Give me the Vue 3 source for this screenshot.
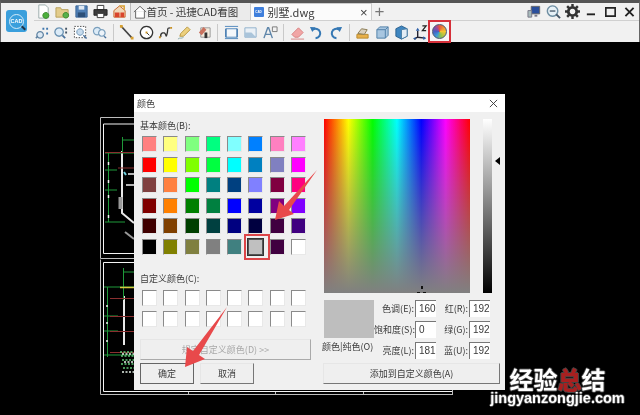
<script setup>
const topIcons = [
  [{ d: 'M3 1h7l3 3v11H3z', f: '#fff', s: '#9aa' }, { d: 'M10.500 9a3.200 3.200 0 1 0 .01 0z', f: '#4caf3c', s: '#3a8a2c' }],
  [{ d: 'M1 4h5l1 2h7v8H1z', f: '#e3cc8c', s: '#b8a05a' }, { d: 'M11.500 9a3 3 0 1 0 .01 0z', f: '#58b04a', s: '#3a8a2c' }],
  [{ d: 'M2 2h12v12H2z', f: '#4f7fb5', s: '#3a6595' }, { d: 'M5 2h6v4H5z', f: '#dfe8f2', s: 'none' }, { d: 'M4 9h8v5H4z', f: '#2c4f78', s: 'none' }],
  [{ d: 'M4.500 1.500h7V6h-7z', f: '#fff', s: '#333' }, { d: 'M1 6h14v6H1z', f: '#3c3c3c', s: '#222' }, { d: 'M4.500 10h7v4.500h-7z', f: '#fff', s: '#333' }],
  [{ d: 'M2 7l6-5 6 5v7H2z', f: '#f0d8b8', s: '#c8672b' }, { d: 'M3 9h5v5H3zM9 9h4v5H9z', f: '#d9442c', s: 'none' }, { d: 'M8 2l5 0 0 4', f: 'none', s: '#d9a030', w: 1.6 }]
]
const g1 = [
  [{ d: 'M6.500 7a3.500 3.500 0 1 0 .01 0z', f: '#dce8f3', s: '#5a7f9f', w: 1.3 }, { d: 'M4 12l-2 2', f: 'none', s: '#5a7f9f', w: 1.6 }, { d: 'M9 3h2v2H9zM13 3h2v2h-2zM13 8h2v2h-2z', f: '#3f76ac', s: 'none' }],
  [{ d: 'M6.500 3a4.500 4.500 0 1 0 .01 0z', f: '#dcebf7', s: '#6c93b3', w: 1.4 }, { d: 'M10 11l3 3', f: 'none', s: '#47709c', w: 1.8 }, { d: 'M13 3h2v2h-2zM13 7h2v2h-2z', f: '#456', s: 'none' }],
  [{ d: 'M1.500 1.500h12v12h-12z', f: '#fff', s: '#444', da: '1.500 1.500' }, { d: 'M7.500 4a3.500 3.500 0 1 0 .01 0z', f: '#c7dbed', s: '#6c93b3' }, { d: 'M11 11l3.500 3.500', f: 'none', s: '#47709c', w: 1.6 }],
  [{ d: 'M5.500 2.500a4 4 0 1 0 .01 0z', f: '#dcebf7', s: '#7a9fbd', w: 1.3 }, { d: 'M10.500 5a3.500 3.500 0 1 0 .01 0z', f: '#eef4fa', s: '#7a9fbd', w: 1.3 }, { d: 'M13 12l2 2', f: 'none', s: '#47709c', w: 1.5 }]
]
const g2 = [
  [{ d: 'M3 2L14 14', f: 'none', s: '#444', w: 1.6 }, { d: 'M1 0h3v3H1zM12.500 12.500h3v3h-3z', f: '#d7a030', s: 'none' }],
  [{ d: 'M8 1.500a6.500 6.500 0 1 0 .01 0z', f: '#fff', s: '#333', w: 1.4 }, { d: 'M8 8l3 3', f: 'none', s: '#333' }, { d: 'M7 7h2v2H7z', f: '#c89020', s: 'none' }],
  [{ d: 'M3 13c-1-5 4-6 5-3s1 2 2-2-1-5 3-5', f: 'none', s: '#333', w: 1.4 }, { d: 'M1 12h2v2H1zM13 2h2v2h-2z', f: '#c89020', s: 'none' }],
  [{ d: 'M3 12l1-3 7-7 3 3-7 7z', f: '#ecd07e', s: '#b8963f' }, { d: 'M1 15c2-2 4 0 6-2', f: 'none', s: '#8aa', w: 1 }],
  [{ d: 'M4 3h10v10H4z', f: '#f2eadc', s: '#999' }, { d: 'M2 8l5-6 3 3-5 6z', f: '#c9725f', s: 'none' }, { d: 'M8 8h3v6H8z', f: '#333', s: 'none' }]
]
const g3 = [
  [{ d: 'M2 4h12v9H2z', f: '#f4f7fa', s: '#4f86bc' }, { d: 'M1 1.500h14M1 14.500h14', f: 'none', s: '#4f86bc' }, { d: 'M2 4v9M14 4v9', f: 'none', s: '#3f76ac', w: 1.4 }],
  [{ d: 'M2 3h12v10H2z', f: '#eaf0f6', s: '#8fb0cc' }, { d: 'M2 13V8h7l5 5z', f: '#aac4da', s: 'none' }],
  [{ d: 'M1 14L5 3h1l4 11M3 10h5', f: 'none', s: '#5f86aa', w: 1.5 }, { d: 'M10 2h5v5h-5z', f: '#f2f2f2', s: '#777' }]
]
const g4 = [
  [{ d: 'M2 10l7-7 5 5-5 5H5z', f: '#f1a5a5', s: '#d88080' }, { d: 'M1 15h14', f: 'none', s: '#d88080' }],
  [{ d: 'M4 5a5 5 0 1 1 3 9', f: 'none', s: '#3578b4', w: 2.200 }, { d: 'M1 2l6 .5-3.500 5z', f: '#3578b4', s: 'none' }],
  [{ d: 'M12 5a5 5 0 1 0-3 9', f: 'none', s: '#3578b4', w: 2.200 }, { d: 'M15 2l-6 .5 3.500 5z', f: '#3578b4', s: 'none' }]
]
const g5 = [
  [{ d: 'M2 10h12v4H2z', f: '#e8b04a', s: '#b98a30' }, { d: 'M3 9l4-5 6 1-3 5z', f: '#d9d0c0', s: '#8a7a50' }],
  [{ d: 'M2 5l3-3h9v9l-3 3H2z', f: '#a8c6e0', s: '#4f7fa8' }, { d: 'M2 5h9v9M11 5l3-3', f: 'none', s: '#4f7fa8' }],
  [{ d: 'M8 1l6 3v8l-6 3-6-3V4z', f: '#3f86c0', s: '#2c628f' }, { d: 'M8 5l6-1v8l-6 3z', f: '#e4edf5', s: '#4c7fa5' }],
  [{ d: 'M5 13V6M5 13l8 1M5 13L1 15', f: 'none', s: '#223', w: 1.5 }, { d: 'M3 6l2-3 2 3zM11 12l3 2-3 2zM0 14l3-1v3z', f: '#2c5fa8', s: 'none' }, { d: 'M10 1h4l-4 5h4', f: 'none', s: '#222', w: 1.300 }]
]
const rightIcons = [
  [{ d: 'M4.500 2.500h9v8h-9z', f: '#2a4f9c', s: '#666' }, { d: 'M1 7h4v7H1z', f: '#a8bbbb', s: '#778' }, { d: 'M8 11.500h3v2H8z', f: '#778', s: 'none' }],
  [{ d: 'M7 2a5.500 5.500 0 1 0 .01 0z', f: '#e7f1f7', s: '#6f8fa3', w: 1.5 }, { d: 'M11 11l4 4', f: 'none', s: '#456', w: 2 }, { d: 'M4 7.500h6', f: 'none', s: '#456', w: 1.4 }]
]
const basic = [
  '#ff8080', '#ffff80', '#80ff80', '#00ff80', '#80ffff', '#0080ff', '#ff80c0', '#ff80ff',
  '#ff0000', '#ffff00', '#80ff00', '#00ff40', '#00ffff', '#0080c0', '#8080c0', '#ff00ff',
  '#804040', '#ff8040', '#00ff00', '#008080', '#004080', '#8080ff', '#800040', '#ff0080',
  '#800000', '#ff8000', '#008000', '#008040', '#0000ff', '#0000a0', '#800080', '#8000ff',
  '#400000', '#804000', '#004000', '#004040', '#000080', '#000040', '#400040', '#400080',
  '#000000', '#808000', '#808040', '#808080', '#408080', '#c0c0c0', '#400040', '#ffffff'
]
const fields = [
  { label: '色调(E):', value: '160' },
  { label: '红(R):', value: '192' },
  { label: '饱和度(S):', value: '0' },
  { label: '绿(G):', value: '192' },
  { label: '亮度(L):', value: '181' },
  { label: '蓝(U):', value: '192' }
]
const groups = [g1, g2, g3, g4, g5]
</script>

<template>
  <div class="app">
    <header class="chrome">
      <div class="logo"><span>CAD</span></div>
      <div class="bars">
        <div class="tabrow">
          <div class="quick">
            <svg v-for="(ic, i) in topIcons" :key="i" class="icon" viewBox="0 0 16 16">
              <path v-for="(p, j) in ic" :key="j" :d="p.d" :fill="p.f" :stroke="p.s" :stroke-width="p.w || 1" />
            </svg>
          </div>
          <div class="tab home">
            <svg class="house" viewBox="0 0 16 16"><path d="M1 8l7-6.500 7 6.500M3 7v8h10V7" fill="#fff" stroke="#555" /></svg>
            <span>首页 - 迅捷CAD看图</span>
          </div>
          <div class="tab active">
            <div class="tabicon">CAD</div>
            <span class="tabname">别墅.dwg</span>
            <span class="tabx">×</span>
          </div>
          <span class="plus">+</span>
          <div class="winctl">
            <svg v-for="(ic, i) in rightIcons" :key="i" class="icon" viewBox="0 0 16 16">
              <path v-for="(p, j) in ic" :key="j" :d="p.d" :fill="p.f" :stroke="p.s" :stroke-width="p.w || 1" />
            </svg>
            <svg class="icon" viewBox="0 0 16 16">
              <path d="M8 3.500a4.500 4.500 0 1 0 .01 0z" fill="none" stroke="#333" stroke-width="3" />
              <path d="M8 0v3M8 13v3M0 8h3M13 8h3M2.300 2.300l2 2M11.700 11.700l2 2M2.300 13.700l2-2M11.700 4.300l2-2" stroke="#333" stroke-width="2.600" />
            </svg>
            <svg class="ctl" viewBox="0 0 12 12"><path d="M2 8h7" stroke="#222" stroke-width="1.600" /></svg>
            <svg class="ctl" viewBox="0 0 12 12"><path d="M2 2.500h8v7H2z" fill="none" stroke="#222" stroke-width="1.400" /></svg>
            <svg class="ctl" viewBox="0 0 12 12"><path d="M2.500 2.500l7 7M9.500 2.500l-7 7" stroke="#222" stroke-width="1.600" /></svg>
          </div>
        </div>
        <div class="toolrow">
          <template v-for="(grp, g) in groups" :key="g">
            <i v-if="g" class="sep"></i>
            <div class="group">
              <svg v-for="(ic, i) in grp" :key="i" class="icon" viewBox="0 0 16 16">
                <path v-for="(p, j) in ic" :key="j" :d="p.d" :fill="p.f" :stroke="p.s" :stroke-width="p.w || 1" :stroke-dasharray="p.da" />
              </svg>
            </div>
          </template>
          <div class="colorbtn">
            <div class="wheel"></div>
          </div>
        </div>
      </div>
    </header>

    <main class="canvas">
      <svg class="drawing" viewBox="0 42 640 373">
        <g fill="none" stroke="#bdbdbd">
          <path d="M100.500 117.500H452M100.500 117.500V258.500H460" />
          <path d="M100.500 259.500V394.500H452" />
          <path d="M188.500 391v4M275.500 391v4M363.500 391v4M452.500 390v5" />
        </g>
        <g fill="none" stroke="#f4f4f4">
          <path d="M103.500 124V253.500H134M103.500 124H134" />
          <path d="M103.500 262.500H134M103.500 262.500V391.500H452" />
        </g>
        <g fill="none" stroke="#e8e8e8" stroke-width="2">
          <path d="M122 151V213L134 223" />
          <path d="M125 232L134 239" stroke="#999" />
          <path d="M124 296V345" />
        </g>
        <path d="M120.500 197v12" stroke="#999" stroke-width="4" />
        <g fill="none" stroke="#1f9a3a">
          <path d="M108.500 153V222M105 153h29M122.500 137V153M122 140h12M105 170h12M105 190h12M105 222h20" />
          <path d="M107.500 287V357M104 287h30M123.500 268V300M123 272h11M104 316h14M104 331h14M104 355h30" />
        </g>
        <g fill="none" stroke="#8a2f2f">
          <path d="M105 152.500h29M118 168h16M110 298.500h24M110 316.500h24M110 331.500h24M110 352.500h24" />
        </g>
        <path d="M120 287.500h14" stroke="#d8c840" stroke-width="1.500" />
        <g fill="none" stroke="#f0f0f0" stroke-width="1.500">
          <path d="M108.500 162v3M108.500 180v3M108.500 195v3M108.500 215v3" />
          <path d="M128 174h7M126 185h8" />
          <path d="M107 305v2M107 322v2M107 340v2" />
        </g>
        <path d="M124 172l2 3" stroke="#6fd0e0" stroke-width="2" />
        <g fill="none" stroke-dasharray="2 1.500" stroke-width="1.500">
          <path d="M120 352h14M121 356h13M122 360h12M121 364h13M123 368h11" stroke="#5fc878" />
          <path d="M122 354h12M124 362h10M122 372h12" stroke="#e8f4ea" />
        </g>
      </svg>

      <section class="dialog">
        <div class="title">
          <span>颜色</span>
          <svg class="close" viewBox="0 0 10 10"><path d="M1 1l8 8M9 1l-8 8" stroke="#333" stroke-width="1" /></svg>
        </div>
        <div class="body">
          <div class="left">
            <div class="lbl first">基本颜色(B):</div>
            <div class="swatches">
              <div v-for="(c, i) in basic" :key="i" class="sw" :class="{ picked: i === 45 }" :style="{ background: c }"></div>
            </div>
            <div class="lbl custom">自定义颜色(C):</div>
            <div class="swatches two">
              <div v-for="n in 16" :key="n" class="sw blank"></div>
            </div>
            <button class="btn wide" disabled>规定自定义颜色(D) &gt;&gt;</button>
            <div class="actions">
              <button class="btn ok">确定</button>
              <button class="btn">取消</button>
            </div>
          </div>
          <div class="right">
            <div class="pickers">
              <div class="spectrum"><div class="cross"></div></div>
              <div class="lum"></div>
              <div class="caret"></div>
            </div>
            <div class="mid">
              <div class="previewcol">
                <div class="preview"></div>
                <div class="previewlbl">颜色|纯色(O)</div>
              </div>
              <div class="fields">
                <template v-for="f in fields" :key="f.label">
                  <label>{{ f.label }}</label>
                  <div class="val">{{ f.value }}</div>
                </template>
              </div>
            </div>
            <button class="btn add">添加到自定义颜色(A)</button>
          </div>
        </div>
      </section>

      <div class="pickbox"></div>
      <svg class="arrows" viewBox="0 42 640 373">
        <path d="M275 220L279 201L284 206L317 170L289 210L294 214z" fill="#e8494b" />
        <path d="M185 367L187 347L193 351L227 307L199 355L205 359z" fill="#e8494b" />
      </svg>

      <div class="mark">
        <div class="cn">经验<b>总</b>结</div>
        <div class="en">jingyanzongjie.com</div>
      </div>
    </main>
  </div>
</template>

<style>
html, body { margin: 0; background: #000; }
</style>

<style scoped>
.app {
  position: relative;
  width: 640px;
  height: 415px;
  overflow: hidden;
  font-family: "Noto Sans CJK SC", "Liberation Sans", sans-serif;
  color: #3a3a3a;
  background: #000;
  filter: blur(0.4px);
}
.chrome {
  position: relative;
  z-index: 1;
  height: 42px;
  box-sizing: border-box;
  display: flex;
  background: #f1f1f1;
  border-top: 3px solid #555;
  border-left: 1px solid #666;
  border-right: 1px solid #666;
}
.logo {
  position: relative;
  flex: none;
  width: 21px;
  height: 22px;
  margin: 7px 0 0 5px;
  background: #3a9fdc;
  border-radius: 3px;
  display: flex;
  align-items: center;
  justify-content: center;
}
.logo span {
  width: 15px;
  height: 15px;
  box-sizing: border-box;
  border: 1px solid #d4ecfa;
  border-radius: 50%;
  color: #fff;
  font: 700 5.500px/13px "Liberation Sans", sans-serif;
  text-align: center;
}
.logo::after {
  content: "";
  position: absolute;
  right: 1px;
  bottom: 3px;
  width: 5px;
  height: 2px;
  background: #234;
  transform: rotate(45deg);
}
.bars { flex: 1; min-width: 0; margin-left: 6.500px; }
.tabrow { height: 18px; display: flex; align-items: flex-end; border-bottom: 1px solid #d0d0d0; box-sizing: border-box; }
.quick { display: flex; gap: 4px; padding-left: 2px; padding-bottom: 1px; }
.icon { width: 15px; height: 15px; flex: none; }
.tab {
  height: 17px;
  display: flex;
  align-items: center;
  font-size: 10.500px;
  white-space: nowrap;
}
.home {
  width: 120px;
  margin-left: 3px;
  padding-left: 2px;
  box-sizing: border-box;
  border-left: 1px solid #bbb;
  background: #ebebeb;
  gap: 0;
}
.house { width: 14px; height: 14px; flex: none; }
.active {
  width: 122px;
  box-sizing: border-box;
  padding-left: 3px;
  background: #fbfbfb;
  border: 1px solid #ccc;
  border-bottom: 0;
  font-size: 11px;
}
.tabicon {
  width: 10px;
  height: 10px;
  flex: none;
  background: #3f7fdc;
  color: #fff;
  font: 700 3px/10px "Liberation Sans", sans-serif;
  text-align: center;
  border-radius: 1px;
}
.tabname { margin-left: 4px; flex: 1; }
.tabx { font: 13px "Liberation Sans", sans-serif; margin-right: 3px; color: #444; }
.plus { font: 300 17px/16px "Liberation Sans", sans-serif; color: #777; margin-left: 3px; }
.winctl { margin-left: auto; display: flex; align-items: center; gap: 4px; padding-right: 2px; height: 17px; }
.ctl { width: 15px; height: 14px; flex: none; }
.toolrow {
  height: 22px;
  display: flex;
  align-items: center;
  margin-left: 0.500px;
}
.group { display: flex; gap: 4.400px; }
.sep { width: 1px; height: 17px; background: #c9c9c9; margin: 0 5.500px; flex: none; }
.colorbtn {
  width: 23px;
  height: 23px;
  flex: none;
  box-sizing: border-box;
  margin-top: -1px;
  border: 2px solid #d6303a;
  display: flex;
  align-items: center;
  justify-content: center;
  background: #f6f6f6;
}
.wheel {
  width: 15px;
  height: 15px;
  border-radius: 50%;
  border: 1px solid #4a5a70;
  box-sizing: border-box;
  background: conic-gradient(#e8563a 0, #f5c430 25%, #8ec24a 45%, #3a9ad9 60%, #4a5fc0 75%, #a04a9a 90%, #e8563a);
}
.canvas { position: relative; height: 373px; background: #000; }
.drawing, .arrows { position: absolute; left: 0; top: 0; width: 640px; height: 373px; }
.arrows { pointer-events: none; }
.dialog {
  position: absolute;
  left: 134px;
  top: 52px;
  width: 371px;
  height: 296px;
  background: #f0f0f0;
  display: flex;
  flex-direction: column;
}
.title {
  height: 18px;
  flex: none;
  background: #fff;
  display: flex;
  align-items: center;
  justify-content: space-between;
  padding: 0 7px 0 3px;
  font-size: 9px;
}
.close { width: 9px; height: 9px; }
.body { flex: 1; display: flex; padding: 7px 5px 6px 6px; gap: 13px; min-height: 0; }
.left { width: 171px; flex: none; display: flex; flex-direction: column; }
.right { flex: 1; display: flex; flex-direction: column; min-width: 0; }
.lbl { font-size: 9px; line-height: 13px; }
.first { margin-bottom: 4px; }
.custom { margin-top: 17px; margin-bottom: 5px; }
.swatches {
  display: grid;
  grid-template-columns: repeat(8, 15px);
  column-gap: 6.300px;
  row-gap: 4.600px;
  padding-left: 2px;
}
.two { row-gap: 5px; margin-bottom: 12px; }
.sw {
  height: 16px;
  box-sizing: border-box;
  border-top: 1px solid #8a8a8a;
  border-left: 1px solid #8a8a8a;
  border-right: 1px solid #e8e8e8;
  border-bottom: 1px solid #e8e8e8;
}
.blank { background: #fff; }
.picked { box-shadow: 0 0 0 1px #333; border-color: #555; }
.btn {
  height: 21px;
  flex: none;
  box-sizing: border-box;
  padding: 0;
  font: 9px "Noto Sans CJK SC", sans-serif;
  color: #3a3a3a;
  background: #efefef;
  border: 1px solid #e6e6e6;
  border-right-color: #777;
  border-bottom-color: #777;
}
.wide { width: 171px; color: #a8a8a8; border-right-color: #aaa; border-bottom-color: #aaa; }
.actions { display: flex; gap: 6px; margin-top: 3px; }
.actions .btn { width: 54px; }
.ok { border-color: #666; }
.pickers { position: relative; display: flex; height: 174px; }
.spectrum {
  position: relative;
  width: 146px;
  background:
    linear-gradient(to bottom, rgba(128,128,128,0), #808080),
    linear-gradient(to right, #f00, #ff0 16.66%, #0f0 33.33%, #0ff 50%, #00f 66.66%, #f0f 83.33%, #f00);
}
.cross {
  position: absolute;
  left: 93px;
  bottom: 0;
  width: 9px;
  height: 7px;
  background:
    linear-gradient(#111, #111) 4px 0 / 2px 3px no-repeat,
    linear-gradient(#111, #111) 0 6px / 3px 1px no-repeat,
    linear-gradient(#111, #111) 6px 6px / 3px 1px no-repeat;
}
.lum {
  width: 9px;
  margin-left: 13px;
  background: linear-gradient(to bottom, #fff, #c0c0c0 25%, #808080 50%, #000);
}
.caret {
  position: absolute;
  left: 171px;
  top: 38px;
  border-style: solid;
  border-width: 4px 5px 4px 0;
  border-color: transparent #000 transparent transparent;
}
.mid { display: flex; margin-top: 7px; height: 63px; }
.previewcol { width: 50px; flex: none; }
.preview { height: 38px; background: #bebebe; }
.previewlbl { font-size: 9px; line-height: 13px; margin-top: 2px; white-space: nowrap; margin-left: -2px; }
.fields {
  flex: 1;
  display: grid;
  grid-template-columns: 41px 21px 33px 21px;
  grid-auto-rows: 17px;
  row-gap: 4px;
  padding-top: 0;
  font-size: 9px;
  align-items: center;
  margin-top: 0;
}
.fields label { text-align: right; white-space: nowrap; padding-right: 1px; }
.val {
  height: 17px;
  box-sizing: border-box;
  background: #fff;
  border-top: 1px solid #777;
  border-left: 1px solid #777;
  padding-left: 3px;
  font: 10px/15px "Liberation Sans", sans-serif;
}
.add { width: 177px; margin-top: auto; margin-left: -1px; }
.pickbox {
  position: absolute;
  left: 244px;
  top: 192px;
  width: 22px;
  height: 22px;
  border: 2px solid #dc4548;
  box-sizing: content-box;
}
.mark {
  position: absolute;
  left: 486px;
  top: 324px;
  width: 143px;
  text-align: center;
  color: #fff;
  font-weight: 700;
  text-shadow: -1px 0 #444, 1px 0 #444, 0 -1px #444, 0 1px #444;
}
.cn { font-size: 24px; line-height: 25px; }
.cn b { color: #a82020; }
.en { font: 700 14.500px/15px "Liberation Sans", sans-serif; }
</style>
